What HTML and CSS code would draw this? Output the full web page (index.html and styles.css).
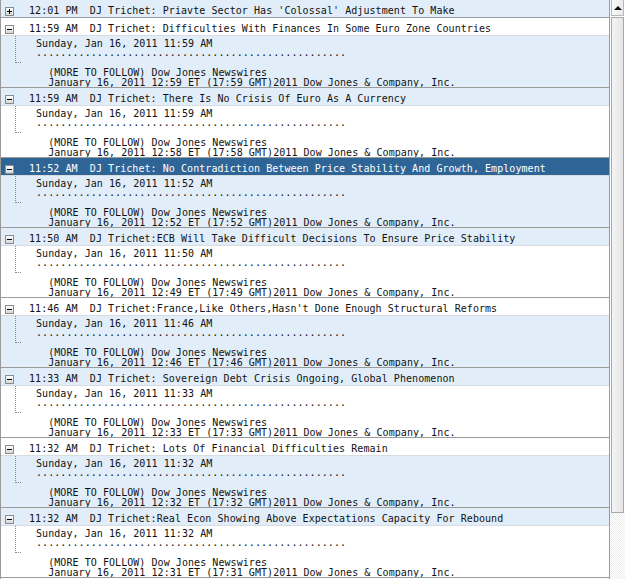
FILE: index.html
```html
<!DOCTYPE html>
<html>
<head>
<meta charset="utf-8">
<link rel="stylesheet" href="styles.css">
</head>
<body>
<div class="frame">
  <div class="list">
    <div class="item first">
      <div class="hdr blue"><span class="tog plus"></span><span class="ttl">12:01 PM  DJ Trichet: Priavte Sector Has 'Colossal' Adjustment To Make</span></div>
    </div>

    <div class="item">
      <div class="hdr white"><span class="tog"></span><span class="ttl">11:59 AM  DJ Trichet: Difficulties With Finances In Some Euro Zone Countries</span></div>
      <div class="det blue"><span class="tree"></span><div class="body">
        <div class="date">Sunday, Jan 16, 2011 11:59 AM</div>
        <div class="dots">...................................................</div>
        <div class="more">  (MORE TO FOLLOW) Dow Jones Newswires
  January 16, 2011 12:59 ET (17:59 GMT)2011 Dow Jones &amp; Company, Inc.</div>
      </div></div>
    </div>

    <div class="item">
      <div class="hdr blue"><span class="tog"></span><span class="ttl">11:59 AM  DJ Trichet: There Is No Crisis Of Euro As A Currency</span></div>
      <div class="det white"><span class="tree"></span><div class="body">
        <div class="date">Sunday, Jan 16, 2011 11:59 AM</div>
        <div class="dots">...................................................</div>
        <div class="more">  (MORE TO FOLLOW) Dow Jones Newswires
  January 16, 2011 12:58 ET (17:58 GMT)2011 Dow Jones &amp; Company, Inc.</div>
      </div></div>
    </div>

    <div class="item">
      <div class="hdr sel"><span class="tog"></span><span class="ttl">11:52 AM  DJ Trichet: No Contradiction Between Price Stability And Growth, Employment</span></div>
      <div class="det blue"><span class="tree"></span><div class="body">
        <div class="date">Sunday, Jan 16, 2011 11:52 AM</div>
        <div class="dots">...................................................</div>
        <div class="more">  (MORE TO FOLLOW) Dow Jones Newswires
  January 16, 2011 12:52 ET (17:52 GMT)2011 Dow Jones &amp; Company, Inc.</div>
      </div></div>
    </div>

    <div class="item">
      <div class="hdr blue"><span class="tog"></span><span class="ttl">11:50 AM  DJ Trichet:ECB Will Take Difficult Decisions To Ensure Price Stability</span></div>
      <div class="det white"><span class="tree"></span><div class="body">
        <div class="date">Sunday, Jan 16, 2011 11:50 AM</div>
        <div class="dots">...................................................</div>
        <div class="more">  (MORE TO FOLLOW) Dow Jones Newswires
  January 16, 2011 12:49 ET (17:49 GMT)2011 Dow Jones &amp; Company, Inc.</div>
      </div></div>
    </div>

    <div class="item">
      <div class="hdr white"><span class="tog"></span><span class="ttl">11:46 AM  DJ Trichet:France,Like Others,Hasn't Done Enough Structural Reforms</span></div>
      <div class="det blue"><span class="tree"></span><div class="body">
        <div class="date">Sunday, Jan 16, 2011 11:46 AM</div>
        <div class="dots">...................................................</div>
        <div class="more">  (MORE TO FOLLOW) Dow Jones Newswires
  January 16, 2011 12:46 ET (17:46 GMT)2011 Dow Jones &amp; Company, Inc.</div>
      </div></div>
    </div>

    <div class="item">
      <div class="hdr blue"><span class="tog"></span><span class="ttl">11:33 AM  DJ Trichet: Sovereign Debt Crisis Ongoing, Global Phenomenon</span></div>
      <div class="det white"><span class="tree"></span><div class="body">
        <div class="date">Sunday, Jan 16, 2011 11:33 AM</div>
        <div class="dots">...................................................</div>
        <div class="more">  (MORE TO FOLLOW) Dow Jones Newswires
  January 16, 2011 12:33 ET (17:33 GMT)2011 Dow Jones &amp; Company, Inc.</div>
      </div></div>
    </div>

    <div class="item">
      <div class="hdr white"><span class="tog"></span><span class="ttl">11:32 AM  DJ Trichet: Lots Of Financial Difficulties Remain</span></div>
      <div class="det blue"><span class="tree"></span><div class="body">
        <div class="date">Sunday, Jan 16, 2011 11:32 AM</div>
        <div class="dots">...................................................</div>
        <div class="more">  (MORE TO FOLLOW) Dow Jones Newswires
  January 16, 2011 12:32 ET (17:32 GMT)2011 Dow Jones &amp; Company, Inc.</div>
      </div></div>
    </div>

    <div class="item">
      <div class="hdr blue"><span class="tog"></span><span class="ttl">11:32 AM  DJ Trichet:Real Econ Showing Above Expectations Capacity For Rebound</span></div>
      <div class="det white"><span class="tree"></span><div class="body">
        <div class="date">Sunday, Jan 16, 2011 11:32 AM</div>
        <div class="dots">...................................................</div>
        <div class="more">  (MORE TO FOLLOW) Dow Jones Newswires
  January 16, 2011 12:31 ET (17:31 GMT)2011 Dow Jones &amp; Company, Inc.</div>
      </div></div>
    </div>
  </div>

  <div class="sbar">
    <div class="sbtn"><span class="arrow"></span></div>
    <div class="thumb"></div>
    <div class="track"></div>
  </div>
</div>
</body>
</html>
```

FILE: styles.css
```css
html, body {
  margin: 0;
  padding: 0;
  background: #ffffff;
  overflow: hidden;
}

.frame {
  display: flex;
  width: 625px;
  height: 579px;
  font-family: "DejaVu Sans Mono", "Liberation Mono", monospace;
  font-size: 10px;
  letter-spacing: 0.06px;
  color: #111111;
}

.list {
  width: 608px;
  border-left: 1px solid #9a9a9a;
  border-right: 1px solid #9a9a9a;
  display: flex;
  flex-direction: column;
  overflow: hidden;
}

.item {
  display: flex;
  flex-direction: column;
  flex: none;
}

.hdr {
  height: 17px;
  display: flex;
  align-items: flex-start;
  white-space: pre;
  border-bottom: 1px solid #d8dde2;
  flex: none;
  overflow: hidden;
}

.item.first .hdr {
  border-bottom: 1px solid #9a9a9a;
}

.blue { background: #e1eef9; }
.white { background: #ffffff; }

.hdr.sel {
  background: #2f6496;
  color: #ffffff;
}

.tog {
  width: 7px;
  height: 7px;
  margin-top: 7px;
  margin-left: 4px;
  margin-right: 15px;
  border: 1px solid #8c8c8c;
  background: linear-gradient(#ffffff, #d8d8d8);
  display: flex;
  align-items: center;
  justify-content: center;
  position: relative;
  flex: none;
}

.tog::before {
  content: "";
  width: 5px;
  height: 1px;
  background: #000000;
}

.tog.plus::after {
  content: "";
  position: absolute;
  left: 3px;
  top: 1px;
  width: 1px;
  height: 5px;
  background: #000000;
}

.ttl {
  padding-top: 4px;
  line-height: 13px;
}

.det {
  height: 51px;
  border-bottom: 1px solid #9a9a9a;
  display: flex;
  flex: none;
  overflow: hidden;
}

.tree {
  width: 5px;
  height: 26px;
  margin-left: 14px;
  margin-right: 15px;
  border-left: 1px dotted #8a8a8a;
  border-bottom: 1px dotted #8a8a8a;
  flex: none;
}

.body {
  display: flex;
  flex-direction: column;
  padding-top: 3px;
  white-space: pre;
  line-height: 10px;
  color: #111111;
}

.date {
  line-height: 9px;
}

.dots {
  line-height: 10px;
}

.more {
  margin-top: 10px;
}

.sbar {
  width: 15px;
  display: flex;
  flex-direction: column;
  background: #ffffff;
}

.sbtn {
  height: 15px;
  margin: 0 1px 1px 1px;
  border: 1px solid #b8b8b8;
  border-top: none;
  background: linear-gradient(90deg, #fafafa, #e9e9e9);
  display: flex;
  align-items: center;
  justify-content: center;
}

.arrow {
  width: 0;
  height: 0;
  border-left: 4px solid transparent;
  border-right: 4px solid transparent;
  border-bottom: 4px solid #111111;
}

.thumb {
  height: 494px;
  margin: 0 1px;
  border: 1px solid #a8a8a8;
  background: linear-gradient(90deg, #f4f4f4, #e6e6e6);
  flex: none;
}

.track {
  flex: 1;
  background-color: #ffffff;
  background-image: repeating-conic-gradient(#eeeeee 0 25%, #ffffff 0 50%);
  background-size: 2px 2px;
}
```
